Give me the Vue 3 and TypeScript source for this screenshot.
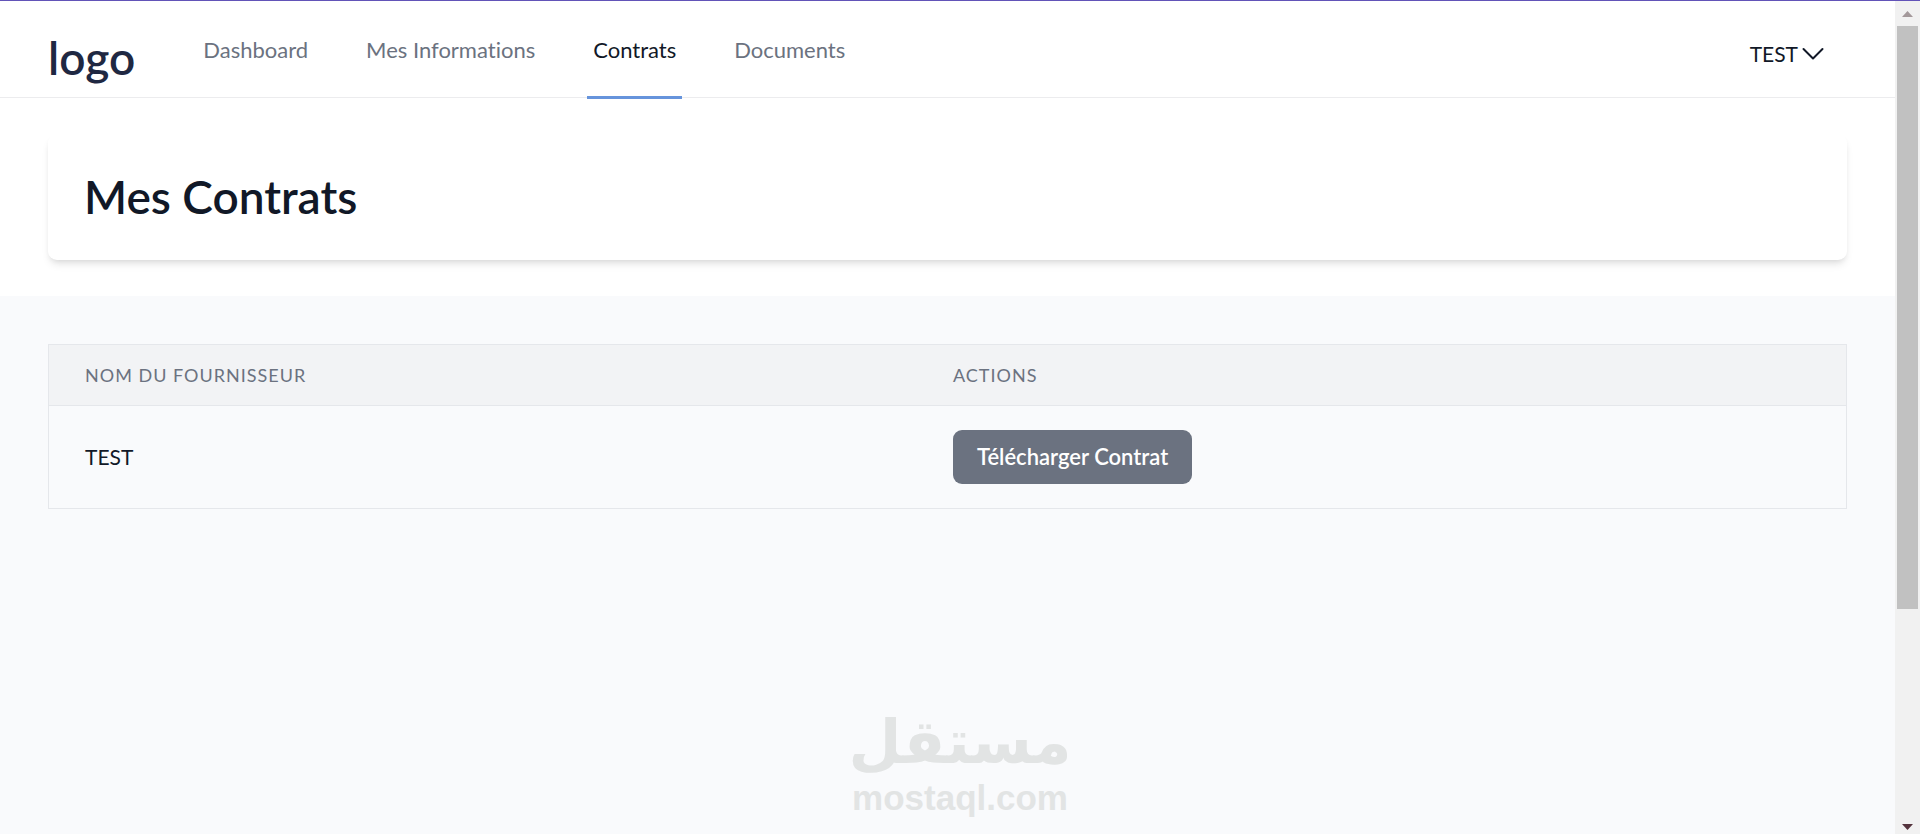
<script setup lang="ts">
interface NavItem {
  label: string
  active: boolean
}

interface Contract {
  id: number
  supplier: string
}

const navItems: NavItem[] = [
  { label: 'Dashboard', active: false },
  { label: 'Mes Informations', active: false },
  { label: 'Contrats', active: true },
  { label: 'Documents', active: false },
]

const contracts: Contract[] = [{ id: 1, supplier: 'TEST' }]
</script>

<template>
  <div class="shell">
    <div class="page">
      <header class="topbar">
        <a class="logo" href="#">logo</a>
        <nav class="nav" aria-label="Navigation principale">
          <a
            v-for="item in navItems"
            :key="item.label"
            href="#"
            class="nav-link"
            :class="{ active: item.active }"
            :aria-current="item.active ? 'page' : undefined"
          >{{ item.label }}</a>
        </nav>
        <button type="button" class="account">
          TEST
          <svg class="chevron" viewBox="0 0 24 24" aria-hidden="true">
            <path d="M2.5 7 12 16.5 21.5 7" />
          </svg>
        </button>
      </header>

      <section class="heading">
        <div class="card">
          <h1>Mes Contrats</h1>
        </div>
      </section>

      <main class="content">
        <table class="contracts">
          <thead>
            <tr>
              <th scope="col" class="supplier">Nom du fournisseur</th>
              <th scope="col">Actions</th>
            </tr>
          </thead>
          <tbody>
            <tr v-for="contract in contracts" :key="contract.id">
              <td>{{ contract.supplier }}</td>
              <td>
                <button type="button" class="download">Télécharger Contrat</button>
              </td>
            </tr>
          </tbody>
        </table>
      </main>
    </div>

    <div class="scrollbar" aria-hidden="true">
      <svg class="arrow up" viewBox="0 0 11 6"><path d="M0 6 5.5 0 11 6z" /></svg>
      <div class="track"><div class="thumb"></div></div>
      <svg class="arrow down" viewBox="0 0 11 6"><path d="M0 0h11L5.5 6z" /></svg>
    </div>

    <div class="watermark">
      <span class="mark-arabic" lang="ar" dir="rtl">مستقل</span>
      <span class="mark-latin">mostaql.com</span>
    </div>
  </div>
</template>

<style>
body {
  margin: 0;
}
</style>

<style scoped>
.shell {
  position: relative;
  box-sizing: border-box;
  display: grid;
  grid-template-columns: minmax(0, 1fr) 25px;
  min-height: 100vh;
  border-top: 1px solid #6253b8;
  background: #f9fafc;
  color: #111827;
  font-family: Lato, "Liberation Sans", sans-serif;
  font-size: 21px;
  font-weight: 400;
  font-variant-ligatures: none;
  line-height: 30px;
}

.topbar {
  display: flex;
  align-items: stretch;
  box-sizing: border-box;
  height: 97px;
  padding: 0 70px 0 48px;
  border-bottom: 1px solid #ececee;
  background: #fff;
}

.logo {
  align-self: center;
  margin-top: 18px;
  color: #1f2842;
  font-size: 46px;
  font-weight: 600;
  line-height: 54px;
  text-decoration: none;
}

.nav {
  display: flex;
  gap: 46px;
  margin-left: 62px;
}

.nav-link {
  position: relative;
  padding: 34px 6px 0;
  color: #6b7280;
  font-size: 22px;
  text-decoration: none;
}

.nav-link.active {
  color: #111827;
}

.nav-link.active::after {
  content: "";
  position: absolute;
  right: 0;
  bottom: -2px;
  left: 0;
  height: 3px;
  background: #6694dc;
}

.account {
  display: flex;
  align-items: center;
  gap: 3px;
  margin: 10px 0 0 auto;
  padding: 0;
  border: 0;
  background: none;
  color: #111827;
  font: inherit;
}

.chevron {
  width: 24px;
  height: 24px;
  fill: none;
  stroke: #111827;
  stroke-width: 2;
  stroke-linecap: round;
  stroke-linejoin: round;
}

.heading {
  padding: 36px 48px;
  background: #fff;
}

.card {
  padding: 36px;
  border-radius: 9px;
  background: #fff;
  box-shadow: 0 6px 9px -2px rgb(0 0 0 / 10%), 0 3px 6px -3px rgb(0 0 0 / 10%);
}

h1 {
  margin: 0;
  font-size: 46px;
  font-weight: 600;
  line-height: 54px;
}

.content {
  padding: 48px;
}

.contracts {
  width: 100%;
  border: 1px solid #e5e7eb;
  border-spacing: 0;
  border-collapse: separate;
}

th,
td {
  padding: 0 36px;
  text-align: left;
}

th {
  height: 60px;
  border-bottom: 1px solid #e5e7eb;
  background: #f2f3f5;
  color: #6b7280;
  font-size: 18px;
  font-weight: 400;
  letter-spacing: 1px;
  text-transform: uppercase;
}

.supplier {
  width: 48.3%;
}

td {
  padding-top: 24px;
  padding-bottom: 24px;
}

.download {
  display: block;
  padding: 12px 24px;
  border: 0;
  border-radius: 9px;
  background: #6b7280;
  color: #fff;
  font: inherit;
  font-size: 22px;
  font-weight: 600;
}

.scrollbar {
  display: flex;
  flex-direction: column;
  align-items: center;
  justify-content: space-between;
  background: #f1f1f1;
}

.arrow {
  flex: none;
  width: 11px;
  height: 6px;
}

.arrow.up {
  margin: 10px 0 9px;
  fill: #a3989a;
}

.arrow.down {
  margin: 10px 0 4px;
  fill: #54333d;
}

.track {
  flex: 1;
  width: 21px;
}

.thumb {
  height: 74%;
  background: #c1c1c1;
}

.watermark {
  position: absolute;
  right: 0;
  bottom: 18px;
  left: 0;
  display: flex;
  flex-direction: column;
  align-items: center;
  color: #e2e4e4;
  font-weight: 700;
  pointer-events: none;
}

.mark-arabic {
  font-family: "DejaVu Sans", sans-serif;
  font-size: 61px;
  line-height: 76px;
}

.mark-latin {
  font-family: "Liberation Sans", sans-serif;
  font-size: 35px;
  line-height: 36px;
}
</style>
